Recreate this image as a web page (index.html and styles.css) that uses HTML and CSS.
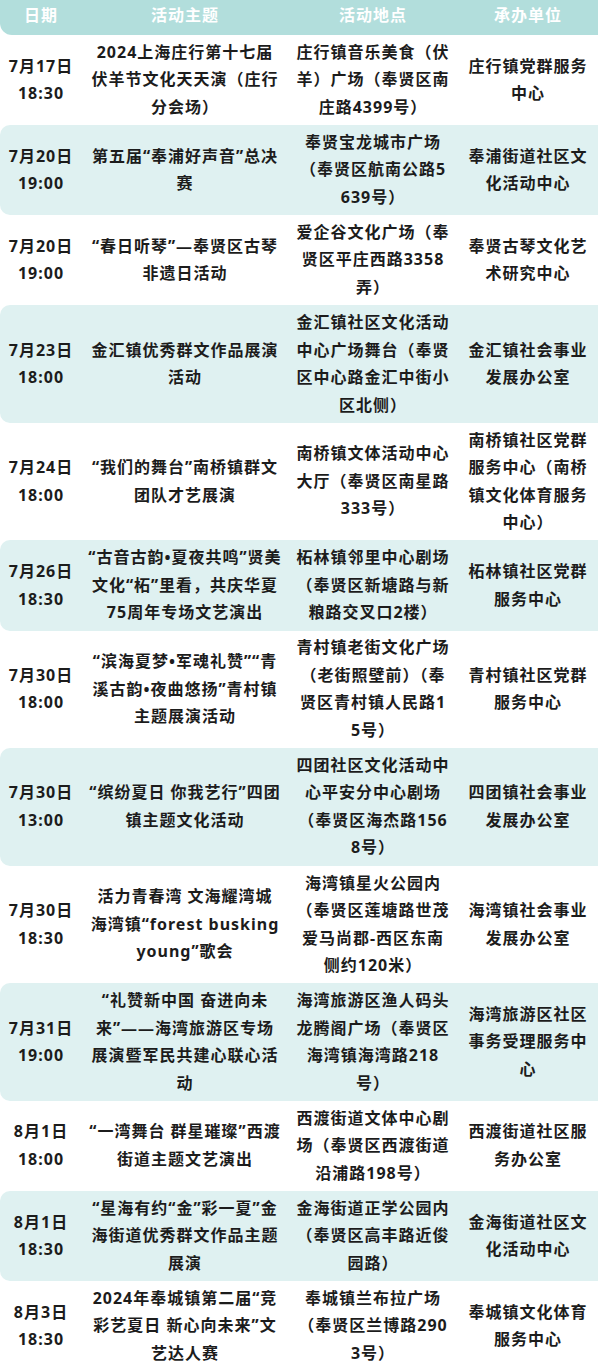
FILE: index.html
```html
<!DOCTYPE html>
<html lang="zh-CN">
<head>
<meta charset="utf-8">
<title>活动安排</title>
<link rel="stylesheet" href="styles.css">
</head>
<body>
<div class="table">
  <div class="row head">
    <div class="cell">日期</div>
    <div class="cell">活动主题</div>
    <div class="cell">活动地点</div>
    <div class="cell">承办单位</div>
  </div>
  <div class="row">
    <div class="cell">7月17日<br>18:30</div>
    <div class="cell">2024上海庄行第十七届<br>伏羊节文化天天演（庄行<br>分会场）</div>
    <div class="cell">庄行镇音乐美食（伏<br>羊）广场（奉贤区南<br>庄路4399号）</div>
    <div class="cell">庄行镇党群服务<br>中心</div>
  </div>
  <div class="row alt">
    <div class="cell">7月20日<br>19:00</div>
    <div class="cell">第五届“奉浦好声音”总决<br>赛</div>
    <div class="cell">奉贤宝龙城市广场<br>（奉贤区航南公路5<br>639号）</div>
    <div class="cell">奉浦街道社区文<br>化活动中心</div>
  </div>
  <div class="row">
    <div class="cell">7月20日<br>19:00</div>
    <div class="cell">“春日听琴”—奉贤区古琴<br>非遗日活动</div>
    <div class="cell">爱企谷文化广场（奉<br>贤区平庄西路3358<br>弄）</div>
    <div class="cell">奉贤古琴文化艺<br>术研究中心</div>
  </div>
  <div class="row alt">
    <div class="cell">7月23日<br>18:00</div>
    <div class="cell">金汇镇优秀群文作品展演<br>活动</div>
    <div class="cell">金汇镇社区文化活动<br>中心广场舞台（奉贤<br>区中心路金汇中街小<br>区北侧）</div>
    <div class="cell">金汇镇社会事业<br>发展办公室</div>
  </div>
  <div class="row">
    <div class="cell">7月24日<br>18:00</div>
    <div class="cell">“我们的舞台”南桥镇群文<br>团队才艺展演</div>
    <div class="cell">南桥镇文体活动中心<br>大厅（奉贤区南星路<br>333号）</div>
    <div class="cell">南桥镇社区党群<br>服务中心（南桥<br>镇文化体育服务<br>中心）</div>
  </div>
  <div class="row alt">
    <div class="cell">7月26日<br>18:30</div>
    <div class="cell">“古音古韵•夏夜共鸣”贤美<br>文化“柘”里看，共庆华夏<br>75周年专场文艺演出</div>
    <div class="cell">柘林镇邻里中心剧场<br>（奉贤区新塘路与新<br>粮路交叉口2楼）</div>
    <div class="cell">柘林镇社区党群<br>服务中心</div>
  </div>
  <div class="row">
    <div class="cell">7月30日<br>18:00</div>
    <div class="cell">“滨海夏梦•军魂礼赞”“青<br>溪古韵•夜曲悠扬”青村镇<br>主题展演活动</div>
    <div class="cell">青村镇老街文化广场<br>（老街照壁前）（奉<br>贤区青村镇人民路1<br>5号）</div>
    <div class="cell">青村镇社区党群<br>服务中心</div>
  </div>
  <div class="row alt">
    <div class="cell">7月30日<br>13:00</div>
    <div class="cell">“缤纷夏日 你我艺行”四团<br>镇主题文化活动</div>
    <div class="cell">四团社区文化活动中<br>心平安分中心剧场<br>（奉贤区海杰路156<br>8号）</div>
    <div class="cell">四团镇社会事业<br>发展办公室</div>
  </div>
  <div class="row">
    <div class="cell">7月30日<br>18:30</div>
    <div class="cell">活力青春湾 文海耀湾城<br>海湾镇“forest busking<br>young”歌会</div>
    <div class="cell">海湾镇星火公园内<br>（奉贤区莲塘路世茂<br>爱马尚郡-西区东南<br>侧约120米）</div>
    <div class="cell">海湾镇社会事业<br>发展办公室</div>
  </div>
  <div class="row alt">
    <div class="cell">7月31日<br>19:00</div>
    <div class="cell">“礼赞新中国 奋进向未<br>来”——海湾旅游区专场<br>展演暨军民共建心联心活<br>动</div>
    <div class="cell">海湾旅游区渔人码头<br>龙腾阁广场（奉贤区<br>海湾镇海湾路218<br>号）</div>
    <div class="cell">海湾旅游区社区<br>事务受理服务中<br>心</div>
  </div>
  <div class="row">
    <div class="cell">8月1日<br>18:00</div>
    <div class="cell">“一湾舞台 群星璀璨”西渡<br>街道主题文艺演出</div>
    <div class="cell">西渡街道文体中心剧<br>场（奉贤区西渡街道<br>沿浦路198号）</div>
    <div class="cell">西渡街道社区服<br>务办公室</div>
  </div>
  <div class="row alt">
    <div class="cell">8月1日<br>18:30</div>
    <div class="cell">“星海有约“金”彩一夏”金<br>海街道优秀群文作品主题<br>展演</div>
    <div class="cell">金海街道正学公园内<br>（奉贤区高丰路近俊<br>园路）</div>
    <div class="cell">金海街道社区文<br>化活动中心</div>
  </div>
  <div class="row">
    <div class="cell">8月3日<br>18:30</div>
    <div class="cell">2024年奉城镇第二届“竞<br>彩艺夏日 新心向未来”文<br>艺达人赛</div>
    <div class="cell">奉城镇兰布拉广场<br>（奉贤区兰博路290<br>3号）</div>
    <div class="cell">奉城镇文化体育<br>服务中心</div>
  </div>
</div>
</body>
</html>
```

FILE: styles.css
```css
html, body {
  margin: 0;
  padding: 0;
  background: #ffffff;
}

body {
  font-family: "Noto Sans", "Noto Sans CJK SC", sans-serif;
  font-size: 16px;
  font-weight: 700;
  letter-spacing: 1px;
  color: #1c1c1c;
  width: 598px;
  overflow: hidden;
}

.table {
  display: flex;
  flex-direction: column;
  width: 598px;
}

.row {
  display: grid;
  grid-template-columns: 82px 206px 170px 140px;
  align-items: center;
  padding: 3.8px 0;
  line-height: 27.5px;
  background: #ffffff;
}

.row.alt {
  background: #dff1f1;
  border-radius: 10px 0 0 10px;
}

.row.head {
  background: #b2dedc;
  color: #ffffff;
  height: 35px;
  box-sizing: border-box;
  padding: 0 0 3px;
  border-radius: 0 0 0 12px;
}

.cell {
  text-align: center;
  white-space: nowrap;
}
```
